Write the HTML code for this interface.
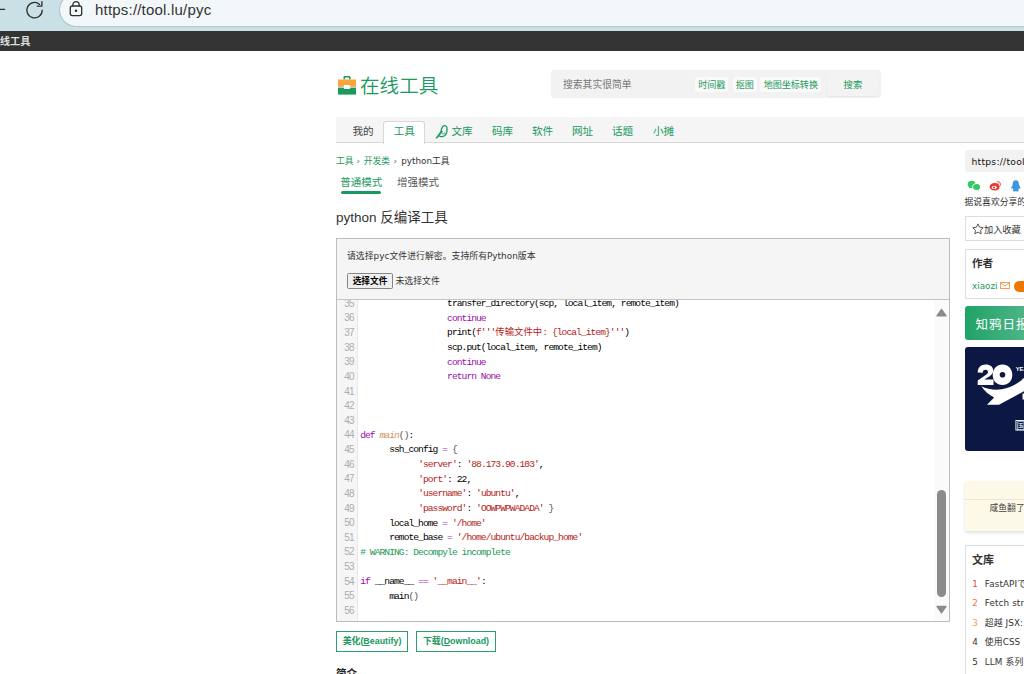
<!DOCTYPE html>
<html lang="zh-CN">
<head>
<meta charset="utf-8">
<title>python 反编译工具 - 在线工具</title>
<style>
html,body{margin:0;padding:0;}
body{width:1024px;height:674px;overflow:hidden;background:#fff;position:relative;
 font-family:"DejaVu Sans","Liberation Sans","Noto Sans CJK SC",sans-serif;color:#333;}
.abs{position:absolute;white-space:nowrap;line-height:1;}
a{color:inherit;text-decoration:none;}
.g{color:#1a9960;}
/* browser chrome */
#chrome{left:0;top:0;width:1024px;height:31px;background:#c9e0e6;}
#pill{left:60px;top:-6px;width:1000px;height:32px;border-radius:16px;background:#f2f7f9;box-shadow:0 0 1.5px rgba(0,0,0,.5);}
#url{left:95px;top:0.6px;font:15px/18px "Liberation Sans",sans-serif;letter-spacing:0.2px;color:#333;}
#dark{left:0;top:31px;width:1024px;height:19.5px;background:#333;}
#darkt{left:-10.6px;top:35.5px;font:bold 10.3px/11px "Liberation Sans","Noto Sans CJK SC",sans-serif;color:#ddd;}
/* header */
#logot{left:360px;top:74px;font:350 19.6px/24px "Liberation Sans","Noto Sans CJK SC",sans-serif;color:#1a9960;}
#search{left:551px;top:70px;width:329.5px;height:28px;background:#f2f2f2;border-radius:3px;}
#ph{left:563px;top:79px;font-size:9.8px;line-height:12px;color:#777;}
.chip{top:77px;height:15px;background:#fafafa;border-radius:2px;font-size:9.05px;line-height:17.6px;overflow:hidden;color:#1a9960;text-align:center;}
#sbtn{left:827px;top:73.5px;width:50.5px;height:22px;background:#f3f3f3;border-radius:3px;box-shadow:0 1px 2px rgba(0,0,0,.06);}
#sbt{left:843.5px;top:79px;font-size:9.4px;line-height:12px;color:#1a9960;}
/* nav */
#nav{left:336px;top:117px;width:688px;height:25px;background:#f5f5f5;border-bottom:1px solid #d8d8d8;}
#tab{left:383px;top:120.5px;width:40px;height:22px;background:#fff;border:1px solid #d8d8d8;border-bottom:none;border-radius:3px 3px 0 0;}
.nv{top:124.6px;font-size:10.6px;line-height:12px;color:#1a9960;}
/* crumbs */
.bc{top:155.5px;font-size:8.8px;line-height:11px;}
.md{top:175.5px;font-size:10.5px;line-height:12px;}
#ul{left:340.5px;top:191px;width:40.5px;height:3px;border-radius:1.5px;background:#1a9960;}
#title{left:336px;top:209.5px;font:13.5px/16px "Liberation Sans","Noto Sans CJK SC",sans-serif;color:#333;}
/* tool box */
#box{left:336px;top:238px;width:612px;height:382px;border:1px solid #bcbcbc;background:#f5f5f5;}
#hint{left:347px;top:251px;font-size:8.9px;line-height:11px;color:#333;}
#fbtn{left:347px;top:273px;width:44px;height:14px;border:1px solid #858585;border-radius:1.5px;background:#efefef;
 font-size:8.7px;line-height:15px;font-weight:bold;text-align:center;color:#000;}
#nofile{left:395.5px;top:276.4px;font-size:8.9px;line-height:11px;color:#333;}
#cm{left:337px;top:299px;width:612px;height:322px;overflow:hidden;background:#fff;border-top:1px solid #c4c4c4;box-sizing:border-box;}
#gut{left:0;top:0;width:20px;height:322px;background:#f6f6f6;border-right:1px solid #e9e9e9;}
#lines{left:0;top:-3.6px;width:612px;}
.ln{position:relative;height:14.626px;white-space:pre;}
.ln b{position:absolute;left:0;top:0.4px;width:16.9px;text-align:right;font:normal 10px/14.626px "Liberation Sans",sans-serif;letter-spacing:-0.7px;color:#adadad;}
.ln i{position:absolute;left:23.2px;top:0.8px;font:normal 9.6px/14.626px "Liberation Mono","Noto Sans CJK SC",monospace;letter-spacing:-0.93px;color:#000;white-space:pre;}
.ln i u{text-decoration:none;letter-spacing:0;font-size:9.4px;}
.p{color:#555;}.k{color:#9a0aa8;}.s{color:#b51a1a;}.c{color:#229955;}.d{color:#d89060;font-style:italic;}.o{color:#9932cc;}.n{color:#164;}
#sbtrack{left:597px;top:0;width:15px;height:321px;background:#fafafa;}
#thumb{left:600px;top:190px;width:9px;height:107px;border-radius:4.5px;background:#8b8b8b;}
.btn{top:631.2px;height:19.2px;border:1px solid #2aa06c;background:#fff;font:bold 8.9px/19.6px "Liberation Sans","Noto Sans CJK SC",sans-serif;color:#1a9960;text-align:center;}
#intro{left:336px;top:666.3px;font-size:10.5px;line-height:14px;font-weight:bold;color:#222;}
/* sidebar */
#surl{left:964.5px;top:150px;width:80px;height:22px;background:#f2f2f2;border-radius:3px;}
#surlt{left:971.5px;top:155.5px;font-size:9.2px;line-height:12px;letter-spacing:0.25px;color:#111;}
#share{left:964.5px;top:196.5px;font-size:8.8px;line-height:11px;color:#333;}
.sbox{left:964.5px;width:80px;border:1px solid #ddd;background:#fff;}
#fav{left:984px;top:223.5px;font-size:9.2px;line-height:11px;color:#333;}
#auth{left:972px;top:256.8px;font-size:10.6px;line-height:13px;font-weight:bold;color:#333;}
#xz{left:972px;top:279.8px;font-size:8.8px;line-height:12px;color:#1a9960;}
#pillo{left:1014px;top:280.5px;width:30px;height:11px;border-radius:5.5px;background:#ee7700;}
#zy{left:964.5px;top:306px;width:80px;height:33.5px;border-radius:3px;background:linear-gradient(90deg,#1fa366,#5cba91);}
#zyt{left:975.4px;top:316.6px;font-size:12.5px;letter-spacing:1px;line-height:15px;color:#fff;}
#ad{left:964.5px;top:346.5px;width:80px;height:104px;border-radius:3px;background:#0d1743;}
#note{left:964.5px;top:480.5px;width:80px;height:50px;background:#fdf9e8;box-shadow:0 2px 3px rgba(0,0,0,.12);}
#noteline{left:964.5px;top:499px;width:80px;height:1px;background:#ebe6d4;}
#notet{left:989.5px;top:502.5px;font-size:8.8px;line-height:11px;color:#444;}
#wk{left:972px;top:553.5px;font-size:11px;line-height:13px;font-weight:bold;color:#333;}
.li{left:972.3px;font-size:8.8px;line-height:12px;letter-spacing:0.12px;color:#333;}
.li em{font-style:normal;display:inline-block;width:12.5px;}
</style>
</head>
<body>
<!-- browser chrome -->
<div class="abs" id="chrome"></div>
<div class="abs" id="pill"></div>
<svg class="abs" style="left:0;top:0" width="100" height="31" viewBox="0 0 100 31" fill="none" stroke="#2e2e2e" stroke-width="1.3" stroke-linecap="round" stroke-linejoin="round">
 <path d="M0 9.3H4.6"/>
 <path d="M42.2 10.2A7.7 7.7 0 1 1 39.6 4.4"/>
 <path d="M41.9 1.6V6.2H37.3"/>
 <rect x="70.3" y="6" width="11.4" height="9.6" rx="2"/>
 <path d="M72.8 6V4.9a3.2 3.2 0 0 1 6.4 0V6"/>
 <circle cx="76" cy="10.8" r="0.6" fill="#222"/>
</svg>
<div class="abs" id="url">https://tool.lu/pyc</div>
<div class="abs" id="dark"></div>
<div class="abs" id="darkt">在线工具</div>

<!-- logo -->
<svg class="abs" style="left:338px;top:76px" width="18" height="19" viewBox="0 0 18 19">
 <path d="M6.2 3.6V1.5a.8.8 0 0 1 .8-.8h4a.8.8 0 0 1 .8.8v2.1" fill="none" stroke="#1a9960" stroke-width="1.5"/>
 <rect x="0" y="3.5" width="18" height="7.3" fill="#fba43c"/>
 <rect x="0" y="11.6" width="18" height="7" fill="#1a9960"/>
 <rect x="5.8" y="9" width="6.4" height="4" rx="1" fill="#fff"/>
</svg>
<div class="abs" id="logot">在线工具</div>

<!-- search -->
<div class="abs" id="search"></div>
<div class="abs" id="ph">搜索其实很简单</div>
<div class="abs chip" style="left:695.3px;width:33px;">时间戳</div>
<div class="abs chip" style="left:732.7px;width:24px;">抠图</div>
<div class="abs chip" style="left:760.3px;width:61px;">地图坐标转换</div>
<div class="abs" id="sbtn"></div>
<div class="abs" id="sbt">搜索</div>

<!-- nav -->
<div class="abs" id="nav"></div>
<div class="abs" id="tab"></div>
<div class="abs nv" style="left:352.5px;color:#444;">我的</div>
<div class="abs nv" style="left:393.7px;">工具</div>
<svg class="abs" style="left:435px;top:124px" width="14" height="15" viewBox="0 0 14 15" fill="none" stroke="#1a9960" stroke-linecap="round" stroke-linejoin="round">
 <path d="M1 13.900L6.500 6.300L7.500 7.700L2.300 13.900Z" fill="#1a9960" stroke-width=".6"/>
 <path d="M6.200 6.800C6.200 4 8 1.900 9.300 1.700C10.900 1.600 12 2.600 12 4.500C12.200 7.500 11.800 10 9.500 11.800C8 12.800 6 12.800 4.800 12.300" stroke-width="1.300"/>
 <path d="M7.600 9.800C8.600 10.200 9.500 9.700 9.800 8.900" stroke-width=".9"/>
</svg>
<div class="abs nv" style="left:451.5px;">文库</div>
<div class="abs nv" style="left:492px;">码库</div>
<div class="abs nv" style="left:532px;">软件</div>
<div class="abs nv" style="left:572px;">网址</div>
<div class="abs nv" style="left:612px;">话题</div>
<div class="abs nv" style="left:653px;">小摊</div>

<!-- breadcrumb / modes / title -->
<div class="abs bc g" style="left:336px;">工具</div>
<div class="abs bc" style="left:356.5px;color:#666;">›</div>
<div class="abs bc g" style="left:363.7px;">开发类</div>
<div class="abs bc" style="left:393.5px;color:#666;">›</div>
<div class="abs bc" style="left:401.2px;color:#333;">python工具</div>
<div class="abs md g" style="left:340.3px;">普通模式</div>
<div class="abs md" style="left:397px;color:#555;">增强模式</div>
<div class="abs" id="ul"></div>
<div class="abs" id="title">python 反编译工具</div>

<!-- tool box -->
<div class="abs" id="box"></div>
<div class="abs" id="hint">请选择pyc文件进行解密。支持所有Python版本</div>
<div class="abs" id="fbtn">选择文件</div>
<div class="abs" id="nofile">未选择文件</div>
<div class="abs" id="cm">
 <div class="abs" id="gut"></div>
 <div class="abs" id="lines">
<div class="ln"><b>35</b><i>                  transfer_directory(scp, local_item, remote_item)</i></div>
<div class="ln"><b>36</b><i>                  <span class="k">continue</span></i></div>
<div class="ln"><b>37</b><i>                  print(<span class="s">f'''<u>传输文件中</u>: {local_item}'''</span>)</i></div>
<div class="ln"><b>38</b><i>                  scp.put(local_item, remote_item)</i></div>
<div class="ln"><b>39</b><i>                  <span class="k">continue</span></i></div>
<div class="ln"><b>40</b><i>                  <span class="k">return None</span></i></div>
<div class="ln"><b>41</b><i></i></div>
<div class="ln"><b>42</b><i></i></div>
<div class="ln"><b>43</b><i></i></div>
<div class="ln"><b>44</b><i><span class="k">def</span> <span class="d">main</span><span class="p">()</span>:</i></div>
<div class="ln"><b>45</b><i>      ssh_config <span class="o">=</span> <span class="p">{</span></i></div>
<div class="ln"><b>46</b><i>            <span class="s">'server'</span>: <span class="s">'88.173.90.103'</span>,</i></div>
<div class="ln"><b>47</b><i>            <span class="s">'port'</span>: 22,</i></div>
<div class="ln"><b>48</b><i>            <span class="s">'username'</span>: <span class="s">'ubuntu'</span>,</i></div>
<div class="ln"><b>49</b><i>            <span class="s">'password'</span>: <span class="s">'OOWPWPWADADA'</span> <span class="p">}</span></i></div>
<div class="ln"><b>50</b><i>      local_home <span class="o">=</span> <span class="s">'/home'</span></i></div>
<div class="ln"><b>51</b><i>      remote_base <span class="o">=</span> <span class="s">'/home/ubuntu/backup_home'</span></i></div>
<div class="ln"><b>52</b><i><span class="c"># WARNING: Decompyle incomplete</span></i></div>
<div class="ln"><b>53</b><i></i></div>
<div class="ln"><b>54</b><i><span class="k">if</span> __name__ <span class="o">==</span> <span class="s">'__main__'</span>:</i></div>
<div class="ln"><b>55</b><i>      main<span class="p">()</span></i></div>
<div class="ln"><b>56</b><i></i></div>
 </div>
 <div class="abs" id="sbtrack"></div>
 <div class="abs" id="thumb"></div>
 <svg class="abs" style="left:597px;top:0" width="15" height="321" viewBox="0 0 15 321">
  <path d="M7.5 9.3l4.6 6.6h-9.2z" fill="#8b8b8b" stroke="#8b8b8b" stroke-width="1.2" stroke-linejoin="round"/>
  <path d="M7.5 313l4.6-6.6h-9.2z" fill="#8b8b8b" stroke="#8b8b8b" stroke-width="1.2" stroke-linejoin="round"/>
 </svg>
</div>
<div class="abs btn" style="left:336px;width:70px;">美化(<span style="text-decoration:underline">B</span>eautify)</div>
<div class="abs btn" style="left:416px;width:78px;">下载(<span style="text-decoration:underline">D</span>ownload)</div>
<div class="abs" id="intro">简介</div>

<!-- sidebar -->
<div class="abs" id="surl"></div>
<div class="abs" id="surlt">https://tool.lu/pyc</div>
<svg class="abs" style="left:964px;top:178px" width="60" height="16" viewBox="964 178 60 16">
 <ellipse cx="971.6" cy="184.300" rx="3.9" ry="3.600" fill="#33c964"/>
 <ellipse cx="976.4" cy="186.900" rx="4.100" ry="3.600" fill="#fff"/>
 <ellipse cx="976.5" cy="187" rx="3.500" ry="3.050" fill="#33c964"/>
 <path d="M969.2 187l-.6 1.600 1.900-.9zM978.600 189.500l.5 1.300-1.700-.8z" fill="#33c964"/>
 <ellipse cx="994.700" cy="186.700" rx="5" ry="3.800" fill="#e8392e"/>
 <ellipse cx="994.300" cy="187.400" rx="2.500" ry="1.600" fill="#fff"/>
 <circle cx="994" cy="187.500" r="1.050" fill="#e8392e"/>
 <path d="M997.300 181.700a2.900 2.900 0 0 1 3.200 3.500" fill="none" stroke="#f0707a" stroke-width="1.100" stroke-linecap="round"/>
 <path d="M997.600 183.300a1.400 1.400 0 0 1 1.400 1.600" fill="none" stroke="#f0707a" stroke-width=".8" stroke-linecap="round"/>
 <path d="M1015.800 180.300c-2.100 0-3.100 1.700-3.100 3.600 0 .7-.2 1.200-.5 1.800-.6 1.100-1.200 2.200-.9 3 .3.500.9-.1 1.300-.700.100.8.500 1.400 1 1.900-.5.200-1 .5-1 .9 0 .6 1.200.700 2 .700.7 0 1-.2 1.200-.4.200.2.500.4 1.200.4.800 0 2-.1 2-.700 0-.4-.5-.700-1-.9.500-.5.900-1.100 1-1.900.4.600 1 1.200 1.300.700.300-.8-.300-1.900-.9-3-.300-.6-.5-1.100-.5-1.800 0-1.900-1-3.600-3.100-3.600z" fill="#3a97e0"/>
</svg>
<div class="abs" id="share">据说喜欢分享的，后来都成了大神</div>
<div class="abs sbox" style="top:216px;height:23.4px;"></div>
<svg class="abs" style="left:971.5px;top:222.5px" width="12" height="12" viewBox="0 0 12 12"><path d="M6 .9l1.6 3.3 3.6.5-2.6 2.5.6 3.6L6 9.1l-3.2 1.7.6-3.6L.8 4.700l3.600-.5z" fill="none" stroke="#555" stroke-width="1" stroke-linejoin="round"/></svg>
<div class="abs" id="fav">加入收藏</div>
<div class="abs sbox" style="top:249.4px;height:47.5px;"></div>
<div class="abs" id="auth">作者</div>
<div class="abs" id="xz">xiaozi</div>
<svg class="abs" style="left:1000.2px;top:282px" width="10" height="7" viewBox="0 0 10 7" fill="none" stroke="#f2a05a" stroke-width="1"><rect x=".5" y=".5" width="9" height="6"/><path d="M.5.800l4.500 3.200 4.500-3.200"/></svg>
<div class="abs" id="pillo"></div>
<div class="abs" id="zy"></div>
<div class="abs" id="zyt">知鸦日报</div>
<div class="abs" id="ad"></div>
<svg class="abs" style="left:964.5px;top:346.5px" width="60" height="104" viewBox="964.5 346.500 60 104">
 <g fill="#fff">
  <path d="M977.200 372c0-4.600 2.900-8 8-8 4.400 0 7.500 2.300 7.500 6 0 3.400-2.600 5.300-6.400 7.600l-2.500 1.500h9.200v5.500h-15.800v-4.700l8-5.300c1.600-1 2.300-1.900 2.300-3.100 0-1.400-1-2.300-2.500-2.300-1.700 0-2.700 1.100-2.800 3z"/>
  <path fill-rule="evenodd" d="M1002 364c5.800 0 9.800 4.300 9.800 10.300s-4 10.300-9.800 10.300-9.800-4.300-9.800-10.300 4-10.300 9.800-10.300zm0 7.500a2.800 2.800 0 1 0 0 5.600 2.800 2.800 0 0 0 0-5.600z"/>
  <path d="M980.800 385.800c7 3.400 16.500 4.600 25.500 1.800 7.500-2.400 12.800-6.500 17.700-10v12.800l-25.500 13.800h-12l7.200-7.200c-5.200-2.400-10-6.600-12.900-11.200z"/>
 </g>
 <text x="1015.200" y="370.800" font-family="Liberation Sans,sans-serif" font-weight="bold" font-size="5.800" fill="#fff">YEARS</text>
 <rect x="1022" y="378" width="2" height="2.500" fill="#fff"/><rect x="1022" y="393" width="2" height="6" fill="#fff"/>
 <rect x="1015.400" y="420" width="9.800" height="9.600" fill="none" stroke="#fff" stroke-width=".9"/>
 <text x="1016" y="428.400" font-family="Noto Sans CJK SC,sans-serif" font-size="8.600" fill="#fff">国</text>
</svg>
<div class="abs" id="note"></div>
<div class="abs" id="noteline"></div>
<div class="abs" id="notet">咸鱼翻了身</div>
<div class="abs sbox" style="top:544.5px;height:160px;"></div>
<div class="abs" id="wk">文库</div>
<div class="abs li" style="top:577.5px;"><em style="color:#e8433f;">1</em>FastAPIで始める</div>
<div class="abs li" style="top:597.2px;"><em style="color:#f4743a;">2</em>Fetch streaming</div>
<div class="abs li" style="top:616.5px;"><em style="color:#f5a04a;">3</em>超越 JSX: 模板</div>
<div class="abs li" style="top:636.4px;"><em>4</em>使用CSS</div>
<div class="abs li" style="top:656.2px;"><em>5</em>LLM 系列</div>
</body>
</html>
